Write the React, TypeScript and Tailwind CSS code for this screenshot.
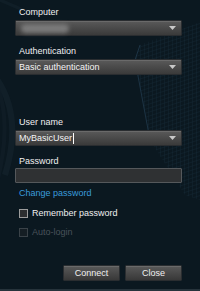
import React from 'react';

const font = { fontFamily: '"Liberation Sans", Arial, sans-serif' };

const Arrow = () => (
  <svg width="7" height="4" viewBox="0 0 7 4" className="shrink-0">
    <path d="M0 0 H7 L3.5 4 Z" fill="#c8c8c8" />
  </svg>
);

const Combo: React.FC<{ text?: string; blurred?: boolean; caret?: boolean }> = ({ text, blurred, caret }) => (
  <div className="h-[16px] flex items-center justify-between pl-[3px] pr-[5px] rounded-[1px] border border-[#2a2d30] bg-gradient-to-b from-[#5a5a5a] to-[#3a3a3a] shadow-[inset_0_1px_0_#6a6a6a]">
    {blurred ? (
      <div className="h-[9px] w-[48px] ml-[2px] rounded-full bg-[#7a7a7a] blur-[2px]" />
    ) : (
      <span className="text-[9px] leading-[14px] text-[#f4f4f4] flex items-center">
        {text}
        {caret && <span className="inline-block w-px h-[11px] bg-white ml-px" />}
      </span>
    )}
    <Arrow />
  </div>
);

const Label: React.FC<{ children: React.ReactNode; mb?: string }> = ({ children, mb = 'mb-[2px]' }) => (
  <div className={`h-[12px] leading-[12px] pl-[4px] text-[9px] text-[#f0f0f0] ${mb}`}>{children}</div>
);

const btn =
  'w-[57px] h-[16px] text-[9px] leading-[14px] text-[#f0f0f0] rounded-[1px] border border-[#2a2d30] bg-gradient-to-b from-[#5a5a5a] to-[#383838] shadow-[inset_0_1px_0_#6a6a6a]';

export default function App() {
  return (
    <div className="relative w-[200px] h-[291px] overflow-hidden bg-[#0b1820]" style={font}>
      {/* background art */}
      <svg className="absolute inset-0" width="200" height="291" viewBox="0 0 200 291">
        <defs>
          <pattern id="grid" width="4" height="4" patternUnits="userSpaceOnUse" patternTransform="skewY(-18)">
            <path d="M0 0 H4 M0 0 V4" stroke="#1a3040" strokeWidth="0.7" fill="none" />
          </pattern>
        </defs>
        <polygon points="140,45 200,22 200,200 185,195 150,140 135,60" fill="url(#grid)" opacity="0.8" />
        <path d="M140 45 L135 60 L150 140" stroke="#1c3344" strokeWidth="1" fill="none" />
        <path d="M-10 70 Q25 110 5 175" stroke="#16242e" strokeWidth="6" fill="none" opacity="0.6" />
        <path d="M-20 60 Q20 100 -5 190" stroke="#132029" strokeWidth="4" fill="none" opacity="0.6" />
        <path d="M0 0 L28 12" stroke="#14232c" strokeWidth="3" opacity="0.6" />
      </svg>

      <div className="relative pt-[6px] px-[15px]">
        <div className="w-[167px]">
          <Label>Computer</Label>
          <Combo blurred />

          <div className="mt-[9px]">
            <Label>Authentication</Label>
            <Combo text="Basic authentication" />
          </div>

          <div className="mt-[41px]">
            <Label>User name</Label>
            <Combo text="MyBasicUser" caret />
          </div>

          <div className="mt-[9px]">
            <Label mb="mb-[1px]">Password</Label>
            <div className="h-[15px] rounded-[1px] border border-[#55585b] bg-[#2f3133]" />
          </div>

          <div className="mt-[4px] h-[12px] leading-[12px] pl-[4px] text-[9px] text-[#3a9bdc]">Change password</div>

          <div className="mt-[9px] h-[10px] flex items-center pl-[4px] gap-[4px]">
            <div className="w-[9px] h-[9px] border border-[#9c9c9c] bg-[#2c2e30]" />
            <span className="text-[9px] leading-[10px] text-[#f0f0f0]">Remember password</span>
          </div>

          <div className="mt-[9px] h-[10px] flex items-center pl-[4px] gap-[4px]">
            <div className="w-[9px] h-[9px] border border-[#3a4248] bg-[#151e24]" />
            <span className="text-[9px] leading-[10px] text-[#49525a]">Auto-login</span>
          </div>

          <div className="mt-[28px] flex justify-end gap-[5px]">
            <button className={btn}>Connect</button>
            <button className={btn}>Close</button>
          </div>
        </div>
      </div>
      <div className="absolute left-0 right-0 bottom-0 h-[2px] bg-[#26333b]" />
    </div>
  );
}
